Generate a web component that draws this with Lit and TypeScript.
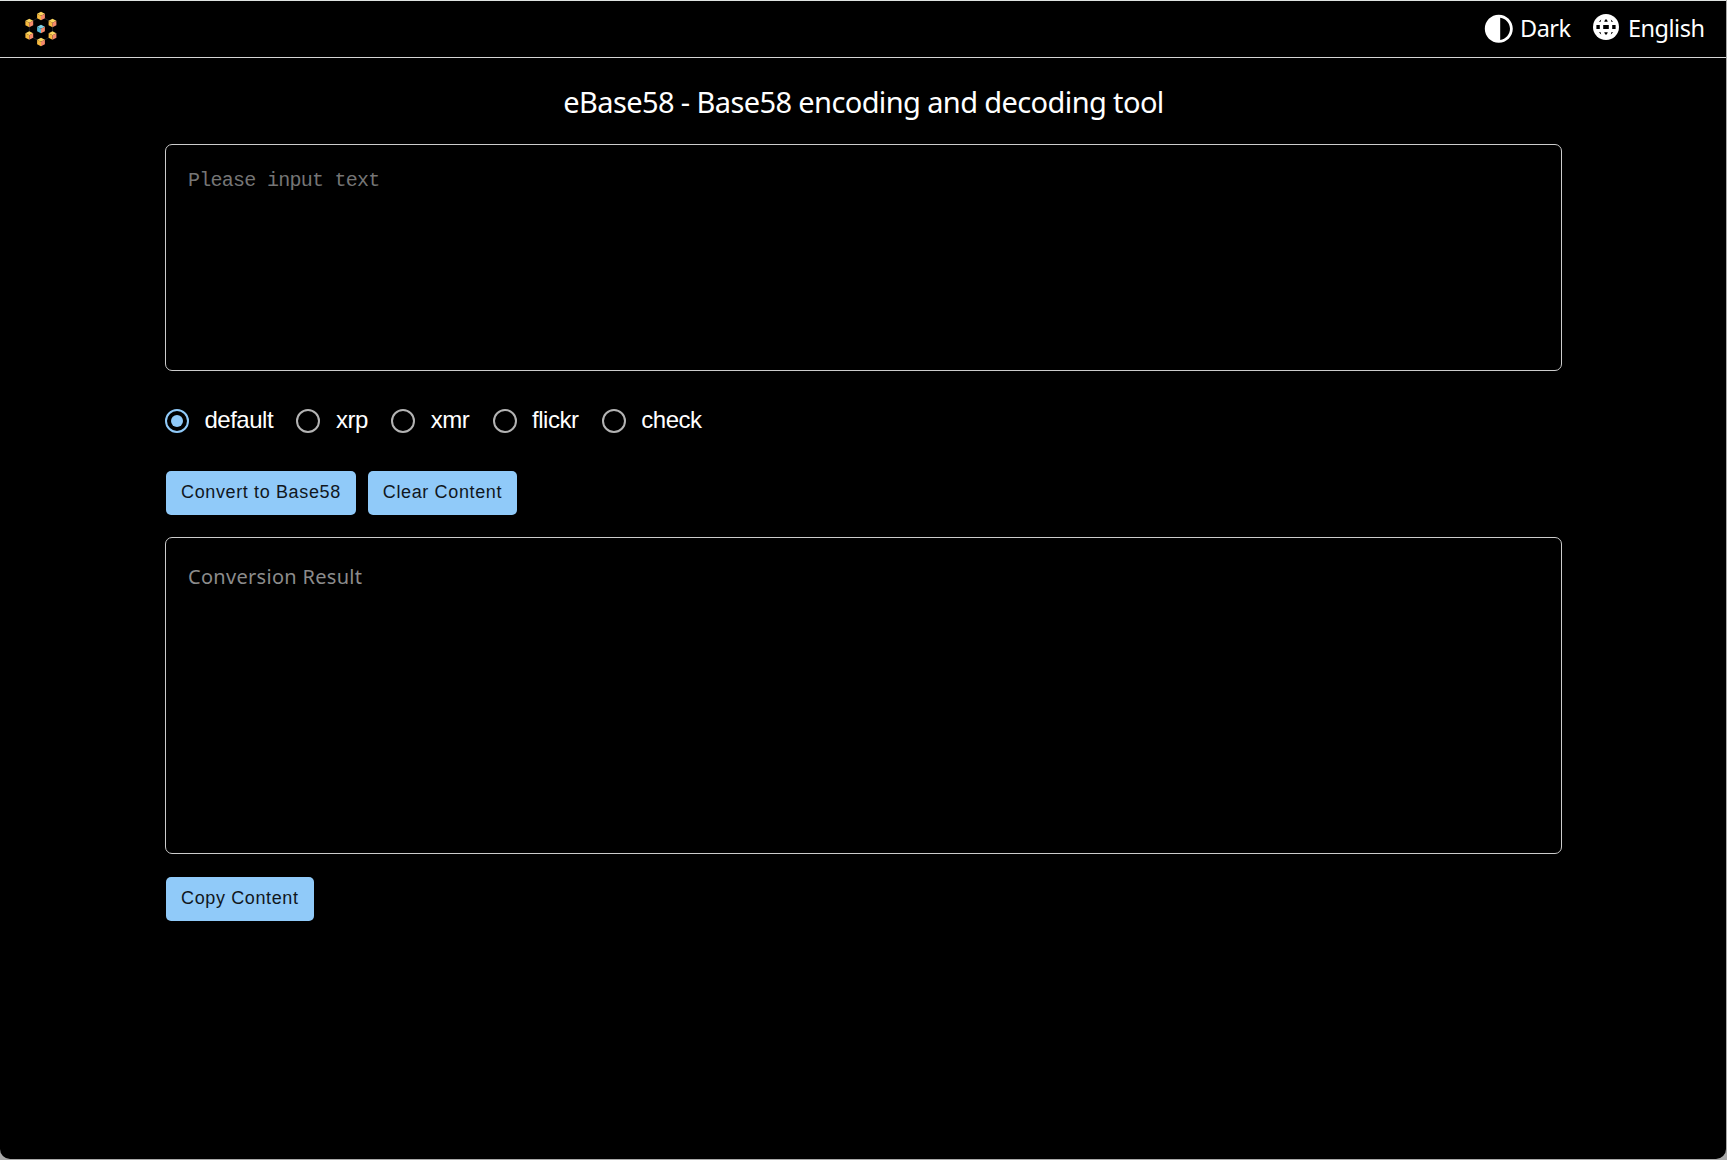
import { LitElement, html, css, svg } from "lit";
import { customElement, state } from "lit/decorators.js";

const VARIANTS = ["default", "xrp", "xmr", "flickr", "check"];

// Centres of the small cubes in the logo; the middle one is blue.
const CUBES = [
  { x: 18, y: 5, blue: false },
  { x: 6.3, y: 12, blue: false },
  { x: 29.5, y: 12, blue: false },
  { x: 18, y: 18, blue: true },
  { x: 6.3, y: 24.5, blue: false },
  { x: 29.5, y: 24.5, blue: false },
  { x: 18, y: 31, blue: false },
];

@customElement("app-root")
export class AppRoot extends LitElement {
  static styles = css`
    :host {
      display: block;
      height: 1160px;
      box-sizing: border-box;
      background: #a9a9a9;
      color: #fff;
      font-family: "Noto Sans", "Open Sans", sans-serif;
    }
    .window {
      box-sizing: border-box;
      height: 1159px;
      width: 1726px;
      background: #000;
      border-top: 1px solid #dfe3e1;
      border-radius: 0 0 10px 10px;
    }
    .bar {
      display: flex;
      align-items: center;
      justify-content: space-between;
      box-sizing: border-box;
      height: 57px;
      padding: 0 22px 0 23px;
      border-bottom: 1px solid #d5d5d5;
      white-space: nowrap;
    }
    .logo { width: 36px; height: 36px; display: block; }
    .menu { display: flex; align-items: center; }
    .item { display: flex; align-items: center; font-size: 23.5px; line-height: 32px; }
    .contrast { width: 33.6px; height: 33.6px; margin-right: 4px; }
    .globe { width: 28px; height: 28px; margin: 0 8px 4px 20px; }
    .dark { width: 52px; letter-spacing: -0.5px; padding-bottom: 2px; }
    .lang { width: 76px; letter-spacing: -0.5px; padding-bottom: 2px; }
    .main {
      display: flex;
      flex-direction: column;
      width: 1397px;
      margin: 0 auto 0 165px;
    }
    .title {
      margin: 0;
      height: 86px;
      line-height: 87px;
      text-align: center;
      font-size: 29px;
      font-weight: 400;
      letter-spacing: -0.61px;
      white-space: nowrap;
    }
    .box {
      box-sizing: border-box;
      border: 1px solid #ccc;
      border-radius: 7px;
      padding: 23px 22px;
      white-space: nowrap;
    }
    .input {
      height: 227px;
      padding-top: 21px;
      color: #757575;
      font-family: "Liberation Mono", monospace;
      font-size: 20px;
      line-height: 30px;
      letter-spacing: -0.73px;
    }
    .result {
      height: 317px;
      color: #8c8c8c;
      font-size: 20px;
      line-height: 31px;
      letter-spacing: 0.3px;
    }
    .radios {
      display: flex;
      align-items: center;
      height: 100px;
      font-family: "Liberation Sans", Arial, sans-serif;
      font-size: 24px;
      letter-spacing: -0.5px;
    }
    .radio { display: flex; align-items: center; margin-right: 23.4px; cursor: pointer; }
    .ring {
      box-sizing: border-box;
      width: 24px;
      height: 24px;
      border: 2px solid #b3b3b3;
      border-radius: 50%;
      margin-right: 15.5px;
      display: flex;
      align-items: center;
      justify-content: center;
    }
    .on .ring { border-color: #90caf9; }
    .on .ring::after {
      content: "";
      width: 12px;
      height: 12px;
      border-radius: 50%;
      background: #90caf9;
    }
    .label { line-height: 28px; padding-bottom: 3px; }
    .actions { display: flex; gap: 12px; padding-left: 1px; }
    .actions.first { margin-bottom: 22px; }
    .actions.last { margin-top: 23px; }
    .btn {
      border: 0;
      border-radius: 5px;
      height: 44px;
      padding: 0 15px 1px;
      background: #90caf9;
      color: #10171d;
      font-family: "Liberation Sans", Arial, sans-serif;
      font-size: 18px;
      letter-spacing: 0.63px;
      white-space: nowrap;
    }
  `;

  @state() private variant = "default";

  private cube(c: { x: number; y: number; blue: boolean }) {
    const [top, left, right] = c.blue
      ? ["#7fd3e8", "#55b9d6", "#f58a6c"]
      : ["#fbd560", "#f6b93f", "#f58a6c"];
    return svg`<g transform="translate(${c.x} ${c.y})">
      <path d="M0 -4.3 3.9 -2.2 0 -0.3 -3.9 -2.2Z" fill=${top}></path>
      <path d="M-3.9 -2.2 0 -0.3V4.2L-3.9 2.2Z" fill=${left}></path>
      <path d="M3.9 -2.2 0 -0.3V4.2L3.9 2.2Z" fill=${right}></path>
    </g>`;
  }

  render() {
    return html`
      <div class="window">
        <header class="bar">
          <svg class="logo" viewBox="0 0 36 36">
            <path d="M18 5 29.5 12V24.5L18 31 6.3 24.5V12Z" fill="none" stroke="#1c2024" stroke-width="1"></path>
            ${CUBES.map((c) => this.cube(c))}
          </svg>
          <div class="menu">
            <div class="item">
              <svg class="contrast" viewBox="0 0 24 24" fill="#fff">
                <path d="M12 22c5.52 0 10-4.48 10-10S17.52 2 12 2 2 6.48 2 12s4.48 10 10 10zm1-17.93c3.94.49 7 3.85 7 7.93s-3.05 7.44-7 7.93V4.07z"></path>
              </svg>
              <span class="dark">Dark</span>
            </div>
            <div class="item">
              <svg class="globe" viewBox="0 0 28 28">
                <circle cx="14" cy="14" r="13" fill="#fff"></circle>
                <path fill="#000" d="M11.2 12h5.6v4h-5.6zM4.4 12h3.4v4H4.4zM20.2 12h3.4v4h-3.4zM12.2 8.8 13.2 6.6h1.6L15.8 8.8zM12.2 19.2 13.2 21.4h1.6L15.8 19.2zM6.8 8.8 9.2 6.6 8.7 8.8zM21.2 8.8 18.8 6.6 19.3 8.8zM6.8 19.2 9.2 21.4 8.7 19.2zM21.2 19.2 18.8 21.4 19.3 19.2z"></path>
              </svg>
              <span class="lang">English</span>
            </div>
          </div>
        </header>
        <main class="main">
          <h1 class="title">eBase58 - Base58 encoding and decoding tool</h1>
          <div class="box input">Please input text</div>
          <div class="radios">
            ${VARIANTS.map(
              (v) => html`<div
                class="radio ${v === this.variant ? "on" : ""}"
                @click=${() => (this.variant = v)}
              ><span class="ring"></span><span class="label">${v}</span></div>`
            )}
          </div>
          <div class="actions first">
            <button class="btn">Convert to Base58</button>
            <button class="btn">Clear Content</button>
          </div>
          <div class="box result">Conversion Result</div>
          <div class="actions last"><button class="btn">Copy Content</button></div>
        </main>
      </div>
    `;
  }
}
